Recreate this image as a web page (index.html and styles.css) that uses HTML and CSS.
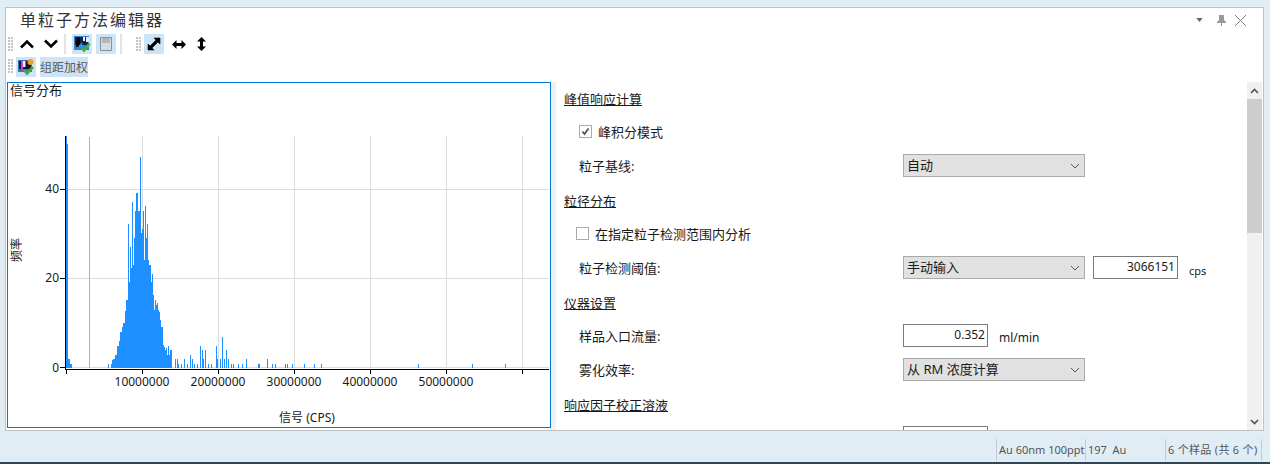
FILE: index.html
```html
<!DOCTYPE html>
<html lang="zh">
<head>
<meta charset="utf-8">
<title>单粒子方法编辑器</title>
<link rel="stylesheet" href="styles.css">
</head>
<body>
<div class="panel">
  <header class="titlebar">
    <h1 class="title">单粒子方法编辑器</h1>
    <div class="window-tools">
      <svg class="tool-menu" width="7" height="4" viewBox="0 0 8 5"><path d="M0 0H8L4 5Z" fill="#666"/></svg>
      <svg class="tool-pin" width="9" height="11" viewBox="0 0 9 11"><path d="M2 0H7V5L9 7V8H5V11H4V8H0V7L2 5Z" fill="#999"/></svg>
      <svg class="tool-close" width="13" height="13" viewBox="0 0 13 13"><path d="M1 1L12 12M12 1L1 12" stroke="#808080" stroke-width="1" fill="none"/></svg>
    </div>
  </header>

  <div class="toolbar">
    <span class="grip"></span>
    <button class="tool tool-chev"><svg width="16" height="10" viewBox="0 0 16 10"><path d="M2 8.5L8 2.5L14 8.5" stroke="#000" stroke-width="2.6" fill="none"/></svg></button>
    <button class="tool tool-chev"><svg width="16" height="10" viewBox="0 0 16 10"><path d="M2 1.5L8 7.5L14 1.5" stroke="#000" stroke-width="2.6" fill="none"/></svg></button>
    <span class="sep"></span>
    <button class="tool on tool-first"><svg width="18" height="18" viewBox="0 0 18 18">
      <rect x="1" y="1" width="15" height="14" fill="#3b7fc8"/><rect x="2" y="2" width="13" height="8" fill="#10254a"/>
      <path d="M4 2H7V8L5 12H3Z" fill="#000"/><path d="M10 2H12V6H10Z" fill="#f2f6fb"/><path d="M13 2H16V7H13Z" fill="#e8eef8"/>
      <path d="M6 11L9 7L10 13H6Z" fill="#2f8fe0"/>
      <path d="M8 12L11 15.5L16.5 8.5" stroke="#4aa84a" stroke-width="2.6" fill="none"/></svg></button>
    <button class="tool on"><svg width="14" height="16" viewBox="0 0 14 16"><path d="M1.5 1.5H12.5V14.5H1.5Z" fill="#d3dde3" stroke="#8b9094"/><rect x="3" y="2" width="8" height="5" fill="#b0b8be"/></svg></button>
    <span class="sep sep-wide"></span>
    <span class="grip"></span>
    <button class="tool on tool-narrow"><svg width="14" height="14" viewBox="0 0 14 14"><path d="M7 1H13V7L11 5L5 11L7 13H1V7L3 9L9 3Z" fill="#000" stroke="#000" stroke-width="0.6"/></svg></button>
    <button class="tool tool-h"><svg width="14" height="9" viewBox="0 0 14 9"><path d="M0 4.5L4.5 0V3H9.5V0L14 4.5L9.5 9V6H4.5V9Z" fill="#000"/></svg></button>
    <button class="tool tool-v"><svg width="9" height="14" viewBox="0 0 9 14"><path d="M4.5 0L9 4.5H6V9.5H9L4.5 14L0 9.5H3V4.5H0Z" fill="#000"/></svg></button>
  </div>

  <div class="toolbar toolbar-second">
    <span class="grip"></span>
    <button class="tool on"><svg width="18" height="18" viewBox="0 0 18 18">
      <rect x="1" y="2" width="14" height="12" fill="#3b6fb8"/><rect x="2" y="3" width="12" height="8" fill="#10163a"/>
      <path d="M4 3H6V11H4ZM8 3H9V9H8Z" fill="#e13bc8"/><path d="M6 3H8V9H6Z" fill="#f2f2f8"/>
      <circle cx="13.5" cy="4" r="3" fill="#f0a020"/>
      <path d="M7 12L10 15.5L16 9" stroke="#4aa84a" stroke-width="2.6" fill="none"/></svg></button>
    <button class="tool on tool-text">组距加权</button>
  </div>

  <main class="content">
    <section class="chart">
      <div class="chart-title">信号分布</div>
      <svg class="plot" width="542" height="320" viewBox="8 107 542 320">
        <g class="grid">
          <path d="M142.5 136V368M218.5 136V368M294.5 136V368M370.5 136V368M446.5 136V368M522.5 136V368M66 189.5H549M66 278.5H549M66 367.5H549"/>
        </g>
        <path class="threshold" d="M89.5 137V368"/>
        <path class="bars" d="M66.5 368V136M67.5 368V144M68.5 368V359M69.5 368V359M70.5 368V364M71.5 368V364
          M108.5 368V364M111.5 368V364M112.5 368V360M113.5 368V359M114.5 368V359M115.5 368V355M116.5 368V355M117.5 368V346M118.5 368V346M119.5 368V341
          M120.5 368V332M121.5 368V332M122.5 368V327M123.5 368V323M124.5 368V323M125.5 368V311M126.5 368V300M127.5 368V300M128.5 368V224M129.5 368V282
          M130.5 368V247M131.5 368V268M132.5 368V202M133.5 368V265M134.5 368V238M135.5 368V211M136.5 368V193M137.5 368V193M138.5 368V211M139.5 368V211
          M140.5 368V157M141.5 368V233M142.5 368V229M143.5 368V211M144.5 368V260M145.5 368V206M146.5 368V238M147.5 368V224M148.5 368V260M149.5 368V265
          M150.5 368V265M151.5 368V282M152.5 368V274M153.5 368V295M154.5 368V310M155.5 368V300M156.5 368V305M157.5 368V303M158.5 368V310M159.5 368V312
          M160.5 368V320M161.5 368V327M162.5 368V327M163.5 368V345M164.5 368V347M165.5 368V350M166.5 368V348M167.5 368V355M168.5 368V346M169.5 368V355
          M170.5 368V350M171.5 368V350M175.5 368V359M177.5 368V359M178.5 368V364M181.5 368V364M184.5 368V359M187.5 368V364M190.5 368V355M192.5 368V359
          M194.5 368V364M197.5 368V364M200.5 368V346M202.5 368V350M203.5 368V359M205.5 368V350M208.5 368V364M211.5 368V364M216.5 368V346M217.5 368V359
          M220.5 368V359M222.5 368V337M224.5 368V359M226.5 368V350M228.5 368V359M231.5 368V364M233.5 368V364M238.5 368V364M242.5 368V364M246.5 368V359
          M258.5 368V364M259.5 368V364M267.5 368V359M272.5 368V364M275.5 368V364M285.5 368V364M287.5 368V364M292.5 368V364M304.5 368V364M314.5 368V364
          M321.5 368V364M418.5 368V364M472.5 368V364M505.5 368V364"/>
        <path class="axis" d="M65.5 136V370M65 369.5H549M66.5 369V374M142.5 369V374M218.5 369V374M294.5 369V374M370.5 369V374M446.5 369V374M522.5 369V374M60 189.5H65M60 278.5H65M60 367.5H65"/>
        <text class="tick" x="59" y="193" text-anchor="end">40</text>
        <text class="tick" x="59" y="282" text-anchor="end">20</text>
        <text class="tick" x="59" y="372" text-anchor="end">0</text>
        <text class="tick" x="142" y="386" text-anchor="middle">10000000</text>
        <text class="tick" x="218" y="386" text-anchor="middle">20000000</text>
        <text class="tick" x="294" y="386" text-anchor="middle">30000000</text>
        <text class="tick" x="370" y="386" text-anchor="middle">40000000</text>
        <text class="tick" x="446" y="386" text-anchor="middle">50000000</text>
        <text class="axis-label" x="307" y="422" text-anchor="middle">信号 (CPS)</text>
        <text class="axis-label" transform="rotate(-90 21 250)" x="21" y="250" text-anchor="middle">频率</text>
      </svg>
    </section>

    <div class="splitter"></div>

    <form class="form">
      <div class="row row-head"><span class="heading">峰值响应计算</span></div>
      <div class="row row-check">
        <span class="check"><svg width="11" height="11" viewBox="0 0 11 11"><path d="M2.5 5.5L4.5 8L8.5 2.5" stroke="#555" stroke-width="1.8" fill="none"/></svg></span>
        <span>峰积分模式</span>
      </div>
      <div class="row row-field">
        <span class="label">粒子基线:</span>
        <div class="select">自动<svg class="caret" width="10" height="6" viewBox="0 0 10 6"><path d="M1 1L5 5L9 1" stroke="#555" fill="none"/></svg></div>
      </div>
      <div class="row row-head"><span class="heading">粒径分布</span></div>
      <div class="row row-check row-check-wide">
        <span class="check"></span>
        <span>在指定粒子检测范围内分析</span>
      </div>
      <div class="row row-field">
        <span class="label">粒子检测阈值:</span>
        <div class="select">手动输入<svg class="caret" width="10" height="6" viewBox="0 0 10 6"><path d="M1 1L5 5L9 1" stroke="#555" fill="none"/></svg></div>
        <div class="number number-after">3066151</div>
        <span class="unit unit-small">cps</span>
      </div>
      <div class="row row-head"><span class="heading">仪器设置</span></div>
      <div class="row row-field">
        <span class="label">样品入口流量:</span>
        <div class="number">0.352</div>
        <span class="unit">ml/min</span>
      </div>
      <div class="row row-field">
        <span class="label">雾化效率:</span>
        <div class="select">从 RM 浓度计算<svg class="caret" width="10" height="6" viewBox="0 0 10 6"><path d="M1 1L5 5L9 1" stroke="#555" fill="none"/></svg></div>
      </div>
      <div class="row row-head"><span class="heading">响应因子校正溶液</span></div>
      <div class="row row-field">
        <span class="label"></span>
        <div class="number"></div>
      </div>
    </form>

    <div class="scrollbar">
      <div class="scroll-btn"><svg width="9" height="6" viewBox="0 0 9 6"><path d="M1 5L4.5 1.5L8 5" stroke="#505050" stroke-width="1.6" fill="none"/></svg></div>
      <div class="scroll-track"><div class="scroll-thumb"></div></div>
      <div class="scroll-btn"><svg width="9" height="6" viewBox="0 0 9 6"><path d="M1 1L4.5 4.5L8 1" stroke="#505050" stroke-width="1.6" fill="none"/></svg></div>
    </div>
  </main>
</div>

<footer class="status">
  <span class="cell cell-a">Au 60nm 100ppt</span>
  <span class="cell cell-b">197&nbsp; Au</span>
  <span class="cell cell-c">6 个样品 (共 6 个)</span>
</footer>
</body>
</html>
```

FILE: styles.css
```css
* { box-sizing: border-box; }
html, body { margin: 0; height: 100%; }
body {
  width: 1270px;
  height: 464px;
  overflow: hidden;
  display: flex;
  flex-direction: column;
  padding: 7px 6px 0 5px;
  background: #e1edf5;
  border-bottom: 2px solid #2f4656;
  font-family: "Noto Sans", "Noto Sans CJK SC", sans-serif;
  font-size: 13px;
  color: #1a1a1a;
}
.panel {
  flex: none;
  height: 424px;
  display: flex;
  flex-direction: column;
  background: #fff;
  border: 1px solid #bcc3c7;
}
.titlebar {
  height: 24px;
  display: flex;
  align-items: center;
  justify-content: space-between;
  padding: 0 16px 0 14px;
  flex: none;
}
.title {
  margin: 0;
  font-size: 16px;
  font-weight: 400;
  letter-spacing: 2px;
  line-height: 24px;
  color: #333;
}
.window-tools { display: flex; align-items: center; }
.tool-pin { margin-left: 14px; }
.tool-close { margin-left: 8px; }
.toolbar {
  height: 23px;
  display: flex;
  align-items: center;
  padding: 1px 0 0 2px;
  flex: none;
}
.toolbar-second { height: 22px; }
.grip {
  width: 6px;
  height: 15px;
  flex: none;
  background-image: radial-gradient(circle at 1px 1px, #c4c4c4 1px, transparent 1px);
  background-size: 3px 3px;
}
.tool {
  width: 20px;
  height: 20px;
  padding: 0;
  border: 0;
  background: transparent;
  display: flex;
  align-items: center;
  justify-content: center;
  flex: none;
  margin-left: 4px;
  font: inherit;
}
.tool.on { background: #cce4f7; }
.tool-chev { margin-left: 2px; width: 21px; }
.tool-chev + .tool-chev { margin-left: 3px; }
.tool-first { margin-left: 6px; }
.tool-narrow { margin-left: 2px; }
.tool-h { margin-left: 5px; }
.tool-v { margin-left: 2px; }
.sep { width: 2px; height: 20px; background: #e2e2e2; margin: 0 0 0 3px; flex: none; }
.sep-wide { margin: 0 14px 0 4px; }
.toolbar-second .tool { margin-left: 2px; }
.toolbar-second .tool-text {
  margin-left: 4px;
  width: 48px;
  font-size: 12px;
  color: #5a5a5a;
}
.content {
  flex: 1;
  min-height: 0;
  margin-top: 5px;
  padding-left: 1px;
  display: flex;
}
.chart {
  width: 544px;
  height: 346px;
  flex: none;
  border: 1px solid #0078d7;
  background: #fff;
}
.chart-title {
  height: 24px;
  padding-left: 2px;
  font-size: 13px;
  line-height: 14px;
  white-space: nowrap;
}
.plot { display: block; }
.grid path { stroke: #dcdcdc; stroke-width: 1; fill: none; }
.threshold { stroke: #ee82ee; stroke-width: 1; fill: none; }
.bars { stroke: #1e90ff; stroke-width: 1; fill: none; }
.axis { stroke: #000; stroke-width: 1; fill: none; }
.tick, .axis-label { font-size: 12px; fill: #1a1a1a; }
.splitter { width: 5px; flex: none; background: #f0f0f0; }
.form {
  flex: 1;
  min-width: 0;
  height: 348px;
  overflow: hidden;
  padding-left: 8px;
  color: #1a1a1a;
}
.row {
  height: 34px;
  display: flex;
  align-items: center;
}
.row-head { padding-bottom: 2px; }
.heading { text-decoration: underline; }
.row-check { padding: 0 0 3px 15px; gap: 6px; }
.row-check-wide { padding-left: 12px; }
.check {
  width: 13px;
  height: 13px;
  flex: none;
  border: 1px solid #ababab;
  background: #fff;
  display: flex;
  align-items: center;
  justify-content: center;
}
.row-field { padding-left: 15px; align-items: flex-start; padding-top: 4px; }
.label { width: 324px; flex: none; line-height: 25px; }
.select {
  width: 182px;
  height: 23px;
  flex: none;
  border: 1px solid #a9a9a9;
  background: #e1e1e1;
  display: flex;
  align-items: center;
  justify-content: space-between;
  padding: 0 4px 0 3px;
  line-height: 1;
}
.caret { flex: none; }
.number {
  width: 85px;
  height: 23px;
  flex: none;
  border: 1px solid #7a7a7a;
  background: #fff;
  font-size: 12px;
  text-align: right;
  line-height: 19px;
  padding: 0 2px;
}
.number-after { margin-left: 8px; }
.unit { margin-left: 11px; font-size: 12px; line-height: 27px; }
.unit-small { font-size: 11px; line-height: 29px; }
.scrollbar {
  width: 15px;
  height: 348px;
  flex: none;
  margin-right: 1px;
  background: #f0f0f0;
  display: flex;
  flex-direction: column;
}
.scroll-btn {
  height: 17px;
  flex: none;
  display: flex;
  align-items: center;
  justify-content: center;
}
.scroll-track { flex: 1; }
.scroll-thumb { height: 134px; background: #cdcdcd; }
.status {
  flex: 1;
  display: flex;
  align-items: center;
  justify-content: flex-end;
  padding: 7px 0 1px;
  font-size: 11px;
  color: #555;
  margin-right: -5px;
}
.cell {
  height: 22px;
  line-height: 22px;
  border-left: 1px solid #c4ccd2;
  padding-left: 2px;
  white-space: nowrap;
  overflow: hidden;
}
.cell-a { width: 89px; }
.cell-b { width: 80px; }
.cell-c { width: 97px; border-right: 1px solid #c4ccd2; margin-right: 7px; letter-spacing: 0.3px; }
```
